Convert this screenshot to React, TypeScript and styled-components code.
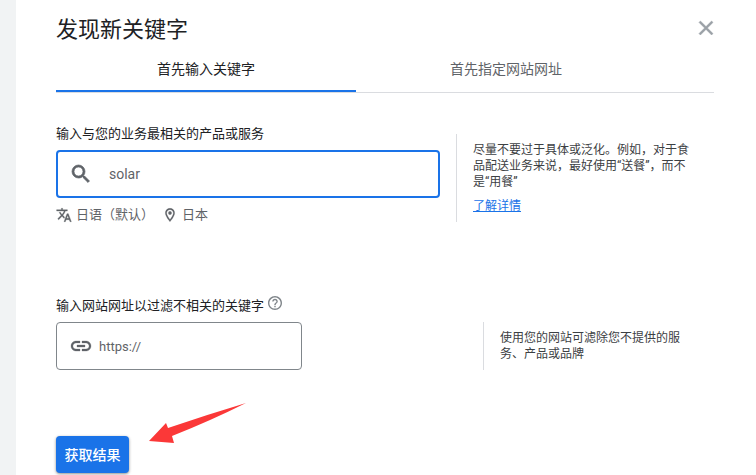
import React, { useState } from "react";
import styled, { createGlobalStyle } from "styled-components";

const GlobalStyle = createGlobalStyle`
  *, *::before, *::after { box-sizing: border-box; }
  body {
    margin: 0;
    background: #f1f3f4;
    font-family: Roboto, "Noto Sans CJK SC", sans-serif;
    color: #202124;
  }
  button, input { font-family: inherit; }
`;

const Page = styled.div`
  min-height: 100vh;
  padding-left: 16px;
`;

const Panel = styled.main`
  min-height: 100vh;
  padding: 16px 42px 0 40px;
  background: #fff;
`;

const Header = styled.header`
  display: flex;
  align-items: flex-start;
  justify-content: space-between;
  height: 28px;
`;

const Title = styled.h1`
  margin: 0;
  font-size: 22px;
  line-height: 28px;
  font-weight: 400;
`;

const CloseButton = styled.button`
  display: flex;
  padding: 0;
  border: 0;
  background: none;
  color: #9aa0a6;
  cursor: pointer;
`;

const Tabs = styled.div`
  display: flex;
  height: 49px;
  border-bottom: 1px solid #dadce0;
`;

const Tab = styled.button<{ $active: boolean }>`
  width: 300px;
  padding: 4px 0 0;
  border: 0;
  border-bottom: 2px solid ${({ $active }) => ($active ? "#1a73e8" : "transparent")};
  background: none;
  color: ${({ $active }) => ($active ? "#202124" : "#5f6368")};
  font-size: 14px;
  line-height: 20px;
  cursor: pointer;
`;

const Section = styled.section<{ $aside: string; $top: string }>`
  display: grid;
  grid-template-columns: minmax(0, 1fr) ${({ $aside }) => $aside};
  column-gap: 16px;
  align-items: end;
  margin-top: ${({ $top }) => $top};
`;

const Field = styled.div<{ $width?: string }>`
  width: ${({ $width }) => $width ?? "100%"};
`;

const LabelRow = styled.div`
  display: flex;
  gap: 4px;
  height: 26px;
  color: #5f6368;
`;

const Label = styled.label`
  color: #202124;
  font-size: 13px;
  line-height: 20px;
`;

const HelpButton = styled.button`
  display: flex;
  height: 14px;
  padding: 0;
  border: 0;
  background: none;
  color: #80868b;
`;

const InputBox = styled.div<{ $active?: boolean; $gap: string }>`
  display: flex;
  align-items: center;
  gap: ${({ $gap }) => $gap};
  height: 48px;
  padding: 0 ${({ $active }) => ($active ? "11px" : "12px")};
  border: ${({ $active }) => ($active ? "2px solid #1a73e8" : "1px solid #80868b")};
  border-radius: 4px;
  color: #5f6368;
`;

const TextInput = styled.input`
  flex: 1;
  min-width: 0;
  padding: 0;
  border: 0;
  outline: 0;
  background: none;
  color: #5f6368;
  font-size: 14px;
  line-height: 20px;
  &::placeholder { color: #5f6368; opacity: 1; font-size: 13px; }
`;

const Settings = styled.div`
  display: flex;
  gap: 8px;
  height: 24px;
  padding-top: 6px;
`;

const Setting = styled.button`
  display: flex;
  align-items: center;
  gap: 4px;
  height: 22px;
  padding: 0;
  border: 0;
  background: none;
  color: #5f6368;
  font-size: 13px;
  line-height: 22px;
  white-space: nowrap;
  cursor: pointer;
`;

const Hint = styled.aside<{ $height: string }>`
  min-height: ${({ $height }) => $height};
  padding: 8px 16px;
  border-left: 1px solid #dadce0;
  color: #3c4043;
  font-size: 12px;
  line-height: 16px;
`;

const HintText = styled.p`
  margin: 0;
`;

const HintLink = styled.a`
  display: inline-block;
  margin-top: 8px;
  color: #1a73e8;
`;

const Actions = styled.div`
  position: relative;
  display: flex;
  margin-top: 66px;
`;

const Submit = styled.button`
  min-width: 73px;
  height: 37px;
  padding: 0 8px 2px;
  border: 0;
  border-radius: 4px;
  background: #1a73e8;
  box-shadow: 0 1px 3px rgba(0, 0, 0, 0.45);
  color: #fff;
  font-size: 14px;
  font-weight: 500;
  cursor: pointer;
`;

const Arrow = styled.svg`
  position: absolute;
  left: 92px;
  bottom: 28px;
  pointer-events: none;
`;

const Icon = ({ size, path, stroke = 0 }: { size: number; path: string; stroke?: number }) => (
  <svg
    width={size}
    height={size}
    viewBox="0 0 24 24"
    fill="currentColor"
    stroke="currentColor"
    strokeWidth={stroke}
    aria-hidden="true"
  >
    <path d={path} />
  </svg>
);

const icons = {
  close: "M19 6.41 17.59 5 12 10.59 6.41 5 5 6.41 10.59 12 5 17.59 6.41 19 12 13.41 17.59 19 19 17.59 13.41 12z",
  search:
    "M15.5 14h-.79l-.28-.27A6.471 6.471 0 0 0 16 9.5 6.5 6.5 0 1 0 9.5 16c1.61 0 3.09-.59 4.23-1.57l.27.28v.79l5 4.99L20.49 19l-4.99-5zm-6 0C7.01 14 5 11.99 5 9.5S7.01 5 9.5 5 14 7.01 14 9.5 11.99 14 9.5 14z",
  translate:
    "m12.87 15.07-2.54-2.51.03-.03A17.52 17.52 0 0 0 14.07 6H17V4h-7V2H8v2H1v1.99h11.17C11.5 7.92 10.44 9.75 9 11.35 8.07 10.32 7.3 9.19 6.69 8h-2c.73 1.63 1.73 3.17 2.98 4.56l-5.09 5.02L4 19l5-5 3.11 3.11.76-2.04zM18.5 10h-2L12 22h2l1.12-3h4.75L21 22h2l-4.5-12zm-2.62 7 1.62-4.33L19.12 17h-3.24z",
  place:
    "M12 2C8.13 2 5 5.13 5 9c0 5.25 7 13 7 13s7-7.75 7-13c0-3.87-3.13-7-7-7zM7 9c0-2.76 2.24-5 5-5s5 2.24 5 5c0 2.88-2.88 7.19-5 9.88C9.92 16.21 7 11.85 7 9zm5-2.5a2.5 2.5 0 1 0 0 5 2.5 2.5 0 0 0 0-5z",
  link: "M3.9 12c0-1.71 1.39-3.1 3.1-3.1h4V7H7c-2.76 0-5 2.24-5 5s2.24 5 5 5h4v-1.9H7c-1.71 0-3.1-1.39-3.1-3.1zM8 13h8v-2H8v2zm9-6h-4v1.9h4c1.71 0 3.1 1.39 3.1 3.1s-1.39 3.1-3.1 3.1h-4V17h4c2.76 0 5-2.24 5-5s-2.24-5-5-5z",
  help: "M11 18h2v-2h-2v2zm1-16C6.48 2 2 6.48 2 12s4.48 10 10 10 10-4.48 10-10S17.52 2 12 2zm0 18c-4.41 0-8-3.59-8-8s3.59-8 8-8 8 3.59 8 8-3.59 8-8 8zm0-14c-2.21 0-4 1.79-4 4h2c0-1.1.9-2 2-2s2 .9 2 2c0 2-3 1.75-3 5h2c0-2.25 3-2.5 3-5 0-2.21-1.79-4-4-4z",
};

export default function App() {
  const [tab, setTab] = useState(0);
  const [keyword, setKeyword] = useState("solar");
  const tabs = ["首先输入关键字", "首先指定网站网址"];

  return (
    <Page>
      <GlobalStyle />
      <Panel>
        <Header>
          <Title>发现新关键字</Title>
          <CloseButton aria-label="关闭">
            <svg width="16" height="24" viewBox="4 0 16 24" fill="currentColor" stroke="currentColor" strokeWidth="0.5" aria-hidden="true">
              <path d={icons.close} />
            </svg>
          </CloseButton>
        </Header>
        <Tabs role="tablist">
          {tabs.map((name, i) => (
            <Tab key={name} role="tab" aria-selected={tab === i} $active={tab === i} onClick={() => setTab(i)}>
              {name}
            </Tab>
          ))}
        </Tabs>

        <Section $aside="258px" $top="31px">
          <Field>
            <LabelRow>
              <Label htmlFor="keyword">输入与您的业务最相关的产品或服务</Label>
            </LabelRow>
            <InputBox $active $gap="16px">
              <Icon size={24} path={icons.search} stroke={0.7} />
              <TextInput id="keyword" value={keyword} onChange={(e) => setKeyword(e.target.value)} />
            </InputBox>
            <Settings>
              <Setting>
                <Icon size={16} path={icons.translate} stroke={0.5} />
                日语（默认）
              </Setting>
              <Setting>
                <Icon size={16} path={icons.place} stroke={0.3} />
                日本
              </Setting>
            </Settings>
          </Field>
          <Hint $height="88px">
            <HintText>尽量不要过于具体或泛化。例如，对于食品配送业务来说，最好使用“送餐”，而不是“用餐”</HintText>
            <HintLink href="#details">了解详情</HintLink>
          </Hint>
        </Section>

        <Section $aside="231px" $top="74px">
          <Field $width="246px">
            <LabelRow>
              <Label htmlFor="site">输入网站网址以过滤不相关的关键字</Label>
              <HelpButton aria-label="帮助">
                <svg width="14" height="14" viewBox="2 2 20 20" fill="currentColor" aria-hidden="true">
                  <path d={icons.help} />
                </svg>
              </HelpButton>
            </LabelRow>
            <InputBox $gap="6px">
              <Icon size={24} path={icons.link} stroke={0.3} />
              <TextInput id="site" placeholder="https://" />
            </InputBox>
          </Field>
          <Hint $height="48px">
            <HintText>使用您的网站可滤除您不提供的服务、产品或品牌</HintText>
          </Hint>
        </Section>

        <Actions>
          <Submit>获取结果</Submit>
          <Arrow width="100" height="42" viewBox="0 0 100 42" aria-hidden="true">
            <path d="M1 38 L18 20 L20 25 Q58 12 98 0 Q62 18 24 33 L26 40 Z" fill="#fb3838" />
          </Arrow>
        </Actions>
      </Panel>
    </Page>
  );
}
